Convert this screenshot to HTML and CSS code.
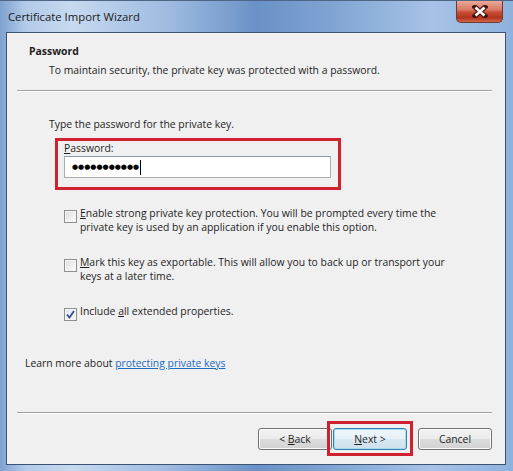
FILE: index.html
```html
<html>
<head>
<link rel="stylesheet" href="styles.css">
</head>
<body>

<div class="window">
  <div class="titlebar">
    <span class="title">Certificate Import Wizard</span>
    <div class="close">
      <svg width="16" height="13" viewBox="0 0 16 13">
        <path d="M3 2 L13 11 M13 2 L3 11" stroke="#4a1510" stroke-width="5" stroke-linecap="square"/>
        <path d="M3.5 2.5 L12.5 10.5 M12.5 2.5 L3.5 10.5" stroke="#ffffff" stroke-width="2.6"/>
      </svg>
    </div>
  </div>

  <div class="client">
    <div class="heading">Password</div>
    <div class="subtitle">To maintain security, the private key was protected with a password.</div>
    <div class="rule"></div>

    <div class="prompt">Type the password for the private key.</div>
    <div class="highlight">
      <div class="label"><u>P</u>assword:</div>
      <div class="field"><span class="dots">&#9679;&#9679;&#9679;&#9679;&#9679;&#9679;&#9679;&#9679;&#9679;&#9679;&#9679;</span><span class="caret"></span></div>
    </div>

    <div class="option">
      <span class="box"></span>
      <span class="text"><u>E</u>nable strong private key protection. You will be prompted every time the private key is used by an application if you enable this option.</span>
    </div>
    <div class="option">
      <span class="box"></span>
      <span class="text"><u>M</u>ark this key as exportable. This will allow you to back up or transport your keys at a later time.</span>
    </div>
    <div class="option">
      <span class="box checked">
        <svg width="9" height="9" viewBox="0 0 9 9"><path d="M1 4.5 L3.5 7.5 L8 1" fill="none" stroke="#3b4f8c" stroke-width="1.8"/></svg>
      </span>
      <span class="text">Include <u>a</u>ll extended properties.</span>
    </div>

    <div class="learn">Learn more about <a href="#">protecting private keys</a></div>

    <div class="rule bottom"></div>
    <div class="buttons">
      <button class="btn">&lt; <u>B</u>ack</button>
      <div class="marked">
        <button class="btn default"><u>N</u>ext &gt;</button>
        <div class="mark"></div>
      </div>
      <button class="btn cancel">Cancel</button>
    </div>
  </div>
</div>

</body>
</html>
```

FILE: styles.css
```css
body {
	margin:0;
	font-family:"Open Sans",sans-serif;
	font-size:10.4px;
	color:#1e1e1e;
	}

.window {
	width:513px;
	height:471px;
	box-sizing:border-box;
	padding:0 7px 6px 6px;
	display:flex;
	flex-direction:column;
	background: linear-gradient(90deg, #7fa2cf 0%, #b3cbe9 5%, #c6d9ef 14%, #9bb9df 34%, #6a91c7 50%, #7fa3d2 64%, #a6c3e6 84%, #8fb2dd 100%);
	border-top:1px solid #4d6684;
	}

.titlebar {
	height:31px;
	display:flex;
	justify-content:space-between;
	align-items:flex-start;
	}

.title {
	font-family:"Open Sans",sans-serif;
	font-size:11.3px;
	color:#1a1a1a;
	padding:8px 0 0 2px;
	}

.close {
	width:45px;
	height:21px;
	margin-right:3px;
	border:1px solid #6b3a33;
	border-top:none;
	border-radius:0 0 5px 5px;
	background: linear-gradient(180deg, #e9aa9a 0%, #da7a66 40%, #c64a33 55%, #b33421 80%, #d0684c 100%);
	display:flex;
	align-items:center;
	justify-content:center;
	}

.client {
	flex:1;
	background:#f0f0f0;
	border:1px solid #3c5473;
	display:flex;
	flex-direction:column;
	}

.heading {
	font-weight:bold;
	line-height:15px;
	margin:11px 0 0 22px;
	}

.subtitle {
	line-height:15px;
	margin:4px 0 0 42px;
	}

.rule {
	height:1px;
	background:#a0a0a0;
	border-bottom:1px solid #ffffff;
	margin:12px 13px 0 10px;
	}

.prompt {
	line-height:15px;
	margin:25px 0 0 42px;
	}

.highlight {
	width:267px;
	margin:6px 0 0 48px;
	padding:0 7px 9px 6px;
	border:3px solid #cf2130;
	}

.label {
	line-height:15px;
	}

.field {
	box-sizing:border-box;
	width:267px;
	height:22px;
	border:1px solid #abadb3;
	border-top-color:#8e9aa8;
	background:#ffffff;
	display:flex;
	align-items:center;
	padding-left:7px;
	}

.dots {
	font-family:"DejaVu Sans",sans-serif;
	font-size:7px;
	letter-spacing:0;
	color:#000000;
	}

.caret {
	width:1px;
	height:15px;
	background:#000000;
	margin-left:1px;
	}

.option {
	display:flex;
	align-items:flex-start;
	margin:16px 40px 0 57px;
	line-height:14px;
	}

.option + .option {
	margin-top:21px;
	}

.box {
	flex:none;
	width:11px;
	height:11px;
	margin:4px 3px 0 0;
	border:1px solid #8e8f8f;
	background: linear-gradient(135deg, #dcdcdc 0%, #f4f4f4 70%, #ffffff 100%);
	box-shadow:inset 0 0 0 1px #f6f6f6;
	display:flex;
	align-items:center;
	justify-content:center;
	}

.box.checked {
	background: linear-gradient(135deg, #e4e8f0 0%, #f6f7fa 100%);
	}

.learn {
	line-height:15px;
	margin:35px 0 0 18px;
	}

.learn a {
	color:#1a6bc4;
	text-decoration:underline;
	}

.rule.bottom {
	margin-top:auto;
	}

.buttons {
	display:flex;
	justify-content:flex-end;
	margin:14px 13px 14px 0;
	}

.btn {
	width:74px;
	height:22px;
	font-family:"Open Sans",sans-serif;
	font-size:10.4px;
	color:#1e1e1e;
	border:1px solid #707070;
	border-radius:3px;
	background: linear-gradient(180deg, #f3f3f3 0%, #ebebeb 48%, #dddddd 52%, #d2d2d2 100%);
	box-shadow:inset 0 0 0 1px #fbfbfb;
	padding:0;
	}

.marked {
	position:relative;
	margin-left:1px;
	}

.btn.default {
	border-color:#3c7fb1;
	box-shadow:inset 0 0 0 1px #9fdcf5;
	background: linear-gradient(180deg, #eef6fb 0%, #e6f1f8 48%, #d9e8f2 52%, #cfe0ec 100%);
	}

.mark {
	position:absolute;
	left:-6px;
	right:-6px;
	top:-7px;
	bottom:-6px;
	border:3px solid #cf2130;
	}

.btn.cancel {
	margin-left:11px;
	}
```
